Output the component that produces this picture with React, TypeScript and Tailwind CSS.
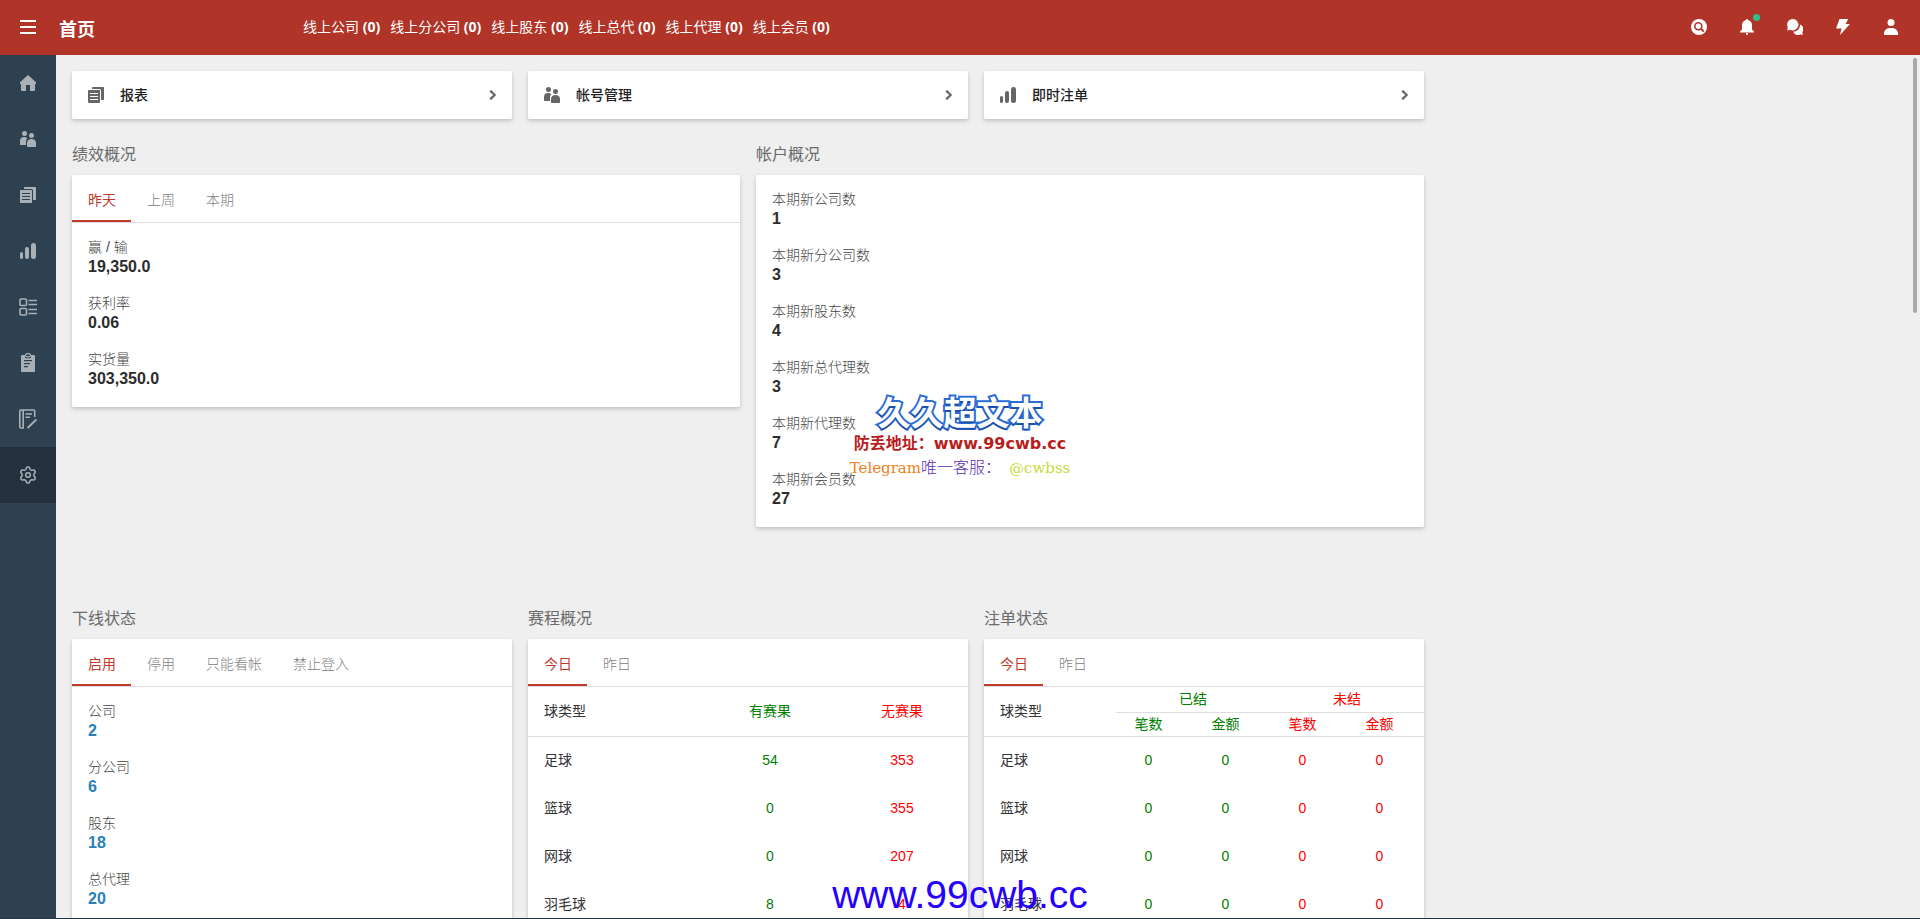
import { useState } from 'react'
import type { ReactNode } from 'react'

interface Stat {
  label: string
  value: string
}

const ONLINE = ['线上公司', '线上分公司', '线上股东', '线上总代', '线上代理', '线上会员']

const RESULTS: Stat[] = [
  { label: '赢 / 输', value: '19,350.0' },
  { label: '获利率', value: '0.06' },
  { label: '实货量', value: '303,350.0' },
]

const ACCOUNTS: Stat[] = [
  { label: '本期新公司数', value: '1' },
  { label: '本期新分公司数', value: '3' },
  { label: '本期新股东数', value: '4' },
  { label: '本期新总代理数', value: '3' },
  { label: '本期新代理数', value: '7' },
  { label: '本期新会员数', value: '27' },
]

const DOWNLINES: Stat[] = [
  { label: '公司', value: '2' },
  { label: '分公司', value: '6' },
  { label: '股东', value: '18' },
  { label: '总代理', value: '20' },
]

const MATCHES = [
  { name: '足球', done: 54, pending: 353 },
  { name: '篮球', done: 0, pending: 355 },
  { name: '网球', done: 0, pending: 207 },
  { name: '羽毛球', done: 8, pending: 4 },
]

// six rounded teeth, one pointing straight up
const GEAR_POINTS = Array.from({ length: 72 }, (_, i) => {
  const a = (i * Math.PI) / 36
  const r = 6.9 - 1.1 * Math.tanh(2 * Math.cos(6 * a))
  return `${(9 + r * Math.cos(a)).toFixed(2)},${(9 + r * Math.sin(a)).toFixed(2)}`
}).join(' ')

// icons
function MenuIcon() {
  return (
    <svg width="16" height="14" viewBox="0 0 16 14" fill="currentColor">
      <path d="M0 0h16v2H0zM0 6h16v2H0zM0 12h16v2H0z" />
    </svg>
  )
}

function HomeIcon() {
  return (
    <svg width="16" height="16" viewBox="0 0 16 16" fill="currentColor">
      <path d="M8 0l8 7.2V9h-1v6.2a.8.8 0 0 1-.8.8H10v-6H6v6H1.8a.8.8 0 0 1-.8-.8V9H0V7.2z" />
    </svg>
  )
}

function UsersIcon() {
  return (
    <svg width="16" height="16" viewBox="0 0 16 16" fill="currentColor">
      <circle cx="4.5" cy="2.5" r="2.5" />
      <circle cx="11.5" cy="4.5" r="2.5" />
      <path d="M0 13.4V10c0-2.4 1.6-4 4-4 1.5 0 2.6.5 3.3 1.3C6.3 8.3 6 9.5 6 11v3H.6a.6.6 0 0 1-.6-.6z" />
      <path d="M7 15.2V12c0-2.6 1.8-4 4.5-4S16 9.4 16 12v3.2a.8.8 0 0 1-.8.8H7.8a.8.8 0 0 1-.8-.8z" />
    </svg>
  )
}

function ReportIcon() {
  return (
    <svg width="16" height="16" viewBox="0 0 16 16" fill="currentColor">
      <path d="M4 2V.8A.8.8 0 0 1 4.8 0h10.4a.8.8 0 0 1 .8.8v11.4a.8.8 0 0 1-.8.8H13V3.5A1.5 1.5 0 0 0 11.5 2z" />
      <path
        fillRule="evenodd"
        d="M.8 3h10.4a.8.8 0 0 1 .8.8v11.4a.8.8 0 0 1-.8.8H.8a.8.8 0 0 1-.8-.8V3.8A.8.8 0 0 1 .8 3zM2 6v1h8V6zm0 3v1h8V9zm0 3v1h8v-1z"
      />
    </svg>
  )
}

function BarsIcon() {
  return (
    <svg width="16" height="16" viewBox="0 0 16 16" fill="currentColor">
      <rect x="0" y="9" width="3" height="7" rx="1.5" />
      <rect x="5" y="4" width="4" height="12" rx="2" />
      <rect x="11" y="0" width="5" height="16" rx="2.3" />
    </svg>
  )
}

function ListIcon() {
  return (
    <svg width="18" height="18" viewBox="0 0 18 18" fill="none" stroke="currentColor" strokeWidth="1.6">
      <rect x="1" y="1" width="6.5" height="6.5" rx="1" />
      <rect x="1" y="10.5" width="6.5" height="6.5" rx="1" />
      <path d="M9.5 2.5H18M9.5 6.5H18M9.5 11.5H18M9.5 15.5H18" />
    </svg>
  )
}

function ClipboardIcon() {
  return (
    <svg width="14" height="20" viewBox="0 0 14 20" fill="currentColor">
      <path
        fillRule="evenodd"
        d="M4 2H1a1 1 0 0 0-1 1v15a1 1 0 0 0 1 1h12a1 1 0 0 0 1-1V3a1 1 0 0 0-1-1h-3v2.2a1 1 0 0 1-1 1H5a1 1 0 0 1-1-1zM3 7v1.3h8V7zm0 3v1.3h6V10zm0 3v1.3h4V13z"
      />
      <rect x="4.6" y=".6" width="4.8" height="3.2" rx="1.5" fill="none" stroke="currentColor" strokeWidth="1.2" />
    </svg>
  )
}

function NoteIcon() {
  return (
    <svg width="18" height="20" viewBox="0 0 18 20" fill="none" stroke="currentColor" strokeWidth="1.6">
      <path d="M15.7 8V2a1 1 0 0 0-1-1H1.8a1 1 0 0 0-1 1v16a1 1 0 0 0 1 1H4.200V1" />
      <path d="M6.5 5H13M6.5 8.3H11" />
      <path d="M8.5 19l9-8.5" strokeWidth="1.9" />
    </svg>
  )
}

function GearIcon() {
  return (
    <svg width="18" height="18" viewBox="0 0 18 18" fill="none" stroke="currentColor" strokeWidth="1.5">
      <polygon points={GEAR_POINTS} strokeLinejoin="round" />
      <circle cx="9" cy="9" r="2.3" />
    </svg>
  )
}

function SearchIcon() {
  return (
    <svg width="16" height="16" viewBox="0 0 16 16" fill="none">
      <circle cx="8" cy="8" r="8" fill="currentColor" />
      <circle cx="7.3" cy="7.2" r="3.5" stroke="#b03428" strokeWidth="1.6" />
      <path d="M9.8 9.6l2.9 2.9" stroke="#b03428" strokeWidth="2" />
    </svg>
  )
}

function BellIcon() {
  return (
    <svg width="14" height="16" viewBox="0 0 14 16" fill="currentColor">
      <path d="M6 1a1 1 0 0 1 2 0c2.5.5 4 2.5 4 5v3.800c0 1 .7 2 2 2.700v1H0v-1c1.300-.7 2-1.700 2-2.700V6c0-2.500 1.500-4.500 4-5z" />
      <path d="M6 14h2v1a1 1 0 0 1-2 0z" />
    </svg>
  )
}

function ChatIcon() {
  return (
    <svg width="16" height="16" viewBox="0 0 16 16" fill="currentColor">
      <path d="M5.7 0a5.7 5.7 0 1 1-2.5 10.8L.3 11.4l.4-3.2A5.7 5.7 0 0 1 5.7 0z" />
      <path d="M13 5.4a5 5 0 0 1 2.300 7.800l.7 2.500-2.800-.3A5 5 0 0 1 6.200 12.800c4 0 7-3.300 6.800-7.400z" />
    </svg>
  )
}

function BoltIcon() {
  return (
    <svg width="14" height="16" viewBox="0 0 14 16" fill="currentColor">
      <path d="M3.5 0h8.7L9.6 5H14L4 16l1.6-6.5H0z" />
    </svg>
  )
}

function UserIcon() {
  return (
    <svg width="14" height="16" viewBox="0 0 14 16" fill="currentColor">
      <circle cx="7" cy="3.5" r="3.5" />
      <path d="M0 16v-1.5C0 11 2.800 9 7 9s7 2 7 5.500V16z" />
    </svg>
  )
}

function ChevronIcon() {
  return (
    <svg width="7" height="10" viewBox="0 0 7 10" fill="none" stroke="currentColor" strokeWidth="2.2">
      <path d="M1.2.6L5.6 5 1.200 9.400" />
    </svg>
  )
}

const SIDE_ITEMS = [
  { name: '首页', icon: <HomeIcon /> },
  { name: '帐号管理', icon: <UsersIcon /> },
  { name: '报表', icon: <ReportIcon /> },
  { name: '即时注单', icon: <BarsIcon /> },
  { name: '列表', icon: <ListIcon /> },
  { name: '记录', icon: <ClipboardIcon /> },
  { name: '日志', icon: <NoteIcon /> },
  { name: '设置', icon: <GearIcon />, active: true },
]

const HEADER_ITEMS = [
  { name: '搜索', icon: <SearchIcon /> },
  { name: '通知', icon: <BellIcon />, dot: true },
  { name: '消息', icon: <ChatIcon /> },
  { name: '快捷', icon: <BoltIcon /> },
  { name: '用户', icon: <UserIcon /> },
]

const SHORTCUTS = [
  { name: '报表', icon: <ReportIcon /> },
  { name: '帐号管理', icon: <UsersIcon /> },
  { name: '即时注单', icon: <BarsIcon /> },
]

function Panel({ title, children }: { title: string; children: ReactNode }) {
  return (
    <section>
      <h2 className="pt-6 pb-2 text-base leading-6 text-[#6a6a6a]">{title}</h2>
      <div className="overflow-hidden rounded-xs bg-white shadow-[0_2px_4px_rgba(0,0,0,0.2)]">{children}</div>
    </section>
  )
}

function Tabs({ items }: { items: string[] }) {
  const [current, setCurrent] = useState(0)

  return (
    <div className="flex h-12 border-b border-[#dedede]" role="tablist">
      {items.map((item, i) => (
        <button
          key={item}
          role="tab"
          aria-selected={i === current}
          onClick={() => setCurrent(i)}
          className={
            i === current
              ? 'border-b-2 border-[#c0392b] pt-1 pr-[15px] pl-4 text-[#c0392b]'
              : 'border-b-2 border-transparent pt-1 pr-[15px] pl-4 font-light text-[#808080]'
          }
        >
          {item}
        </button>
      ))}
    </div>
  )
}

function StatList({ items, link }: { items: Stat[]; link?: boolean }) {
  return (
    <dl className="px-4 pt-4">
      {items.map((s) => (
        <div key={s.label} className="pb-4">
          <dt className="leading-4 font-light text-[#444444]">{s.label}</dt>
          <dd className="text-base leading-6 font-bold text-[#2c2c2c]">
            {link ? <a href="#" className="text-[#2980b9]">{s.value}</a> : s.value}
          </dd>
        </div>
      ))}
    </dl>
  )
}

function MatchTable() {
  return (
    <table className="w-full table-fixed text-center text-[#333333]">
      <thead>
        <tr className="h-[49px] border-b border-[#dedede]">
          <th className="w-[40%] pl-4 text-left font-normal">球类型</th>
          <th className="font-normal text-[#008000]">有赛果</th>
          <th className="font-normal text-[#ff0000]">无赛果</th>
        </tr>
      </thead>
      <tbody>
        {MATCHES.map((m) => (
          <tr key={m.name} className="h-12">
            <td className="pl-4 text-left">{m.name}</td>
            <td className="text-[#008000]">{m.done}</td>
            <td className="text-[#ff0000]">{m.pending}</td>
          </tr>
        ))}
      </tbody>
    </table>
  )
}

function BetTable() {
  return (
    <table className="w-full table-fixed text-center text-[#333333]">
      <colgroup>
        <col className="w-[30%]" />
        <col span={4} />
      </colgroup>
      <thead>
        <tr className="h-[25px] leading-5">
          <th rowSpan={2} className="border-b border-[#dedede] pl-4 text-left font-normal">球类型</th>
          <th colSpan={2} className="border-b border-[#dedede] font-normal text-[#008000]">已结</th>
          <th colSpan={2} className="border-b border-[#dedede] font-normal text-[#ff0000]">未结</th>
        </tr>
        <tr className="h-6 border-b border-[#dedede] leading-5">
          <th className="pr-3 font-normal text-[#008000]">笔数</th>
          <th className="pr-3 font-normal text-[#008000]">金额</th>
          <th className="pr-3 font-normal text-[#ff0000]">笔数</th>
          <th className="pr-3 font-normal text-[#ff0000]">金额</th>
        </tr>
      </thead>
      <tbody>
        {MATCHES.map((m) => (
          <tr key={m.name} className="h-12">
            <td className="pl-4 text-left">{m.name}</td>
            <td className="pr-3 text-[#008000]">0</td>
            <td className="pr-3 text-[#008000]">0</td>
            <td className="pr-3 text-[#ff0000]">0</td>
            <td className="pr-3 text-[#ff0000]">0</td>
          </tr>
        ))}
      </tbody>
    </table>
  )
}

export default function App() {
  return (
    <div className="relative flex h-screen flex-col overflow-hidden bg-[#efefef] font-['Liberation_Sans','Noto_Sans_CJK_SC',sans-serif] text-sm">
      <header className="flex h-[55px] shrink-0 items-center bg-[#b03428] pr-[5px] pb-px text-white">
        <button aria-label="菜单" className="flex w-14 justify-center">
          <MenuIcon />
        </button>
        <h1 className="w-[247px] pt-[6px] pl-[3px] text-lg font-bold">首页</h1>
        <ul className="flex flex-1 gap-[10px] font-['Open_Sans','Noto_Sans_CJK_SC',sans-serif]">
          {ONLINE.map((name) => (
            <li key={name}>
              {name} <b>(0)</b>
            </li>
          ))}
        </ul>
        {HEADER_ITEMS.map((item) => (
          <button key={item.name} aria-label={item.name} className="relative flex h-10 w-12 items-center justify-center">
            {item.icon}
            {item.dot && <span className="absolute top-[7px] right-[11px] size-[7px] rounded-full bg-[#2fc08f]" />}
          </button>
        ))}
      </header>

      <div className="flex min-h-0 flex-1">
        <nav className="w-14 shrink-0 bg-[#2e4150] text-[#a9b1b7]">
          {SIDE_ITEMS.map((item) => (
            <a
              key={item.name}
              href="#"
              aria-label={item.name}
              className={
                item.active
                  ? 'flex h-14 items-center justify-center bg-[#24303e]'
                  : 'flex h-14 items-center justify-center'
              }
            >
              {item.icon}
            </a>
          ))}
        </nav>

        <main className="min-w-0 flex-1 overflow-hidden p-4">
          <div className="max-w-[1352px]">
            <div className="grid grid-cols-3 gap-4">
              {SHORTCUTS.map((s) => (
                <a
                  key={s.name}
                  href="#"
                  className="flex h-12 items-center gap-4 rounded-xs bg-white px-4 text-[#666666] shadow-[0_2px_4px_rgba(0,0,0,0.2)]"
                >
                  {s.icon}
                  <span className="flex-1 font-medium text-[#222222]">{s.name}</span>
                  <ChevronIcon />
                </a>
              ))}
            </div>

            <div className="grid grid-cols-2 gap-4">
              <Panel title="绩效概况">
                <Tabs items={['昨天', '上周', '本期']} />
                <StatList items={RESULTS} />
              </Panel>
              <Panel title="帐户概况">
                <StatList items={ACCOUNTS} />
              </Panel>
            </div>

            <div className="mt-14 grid grid-cols-3 gap-4">
              <Panel title="下线状态">
                <Tabs items={['启用', '停用', '只能看帐', '禁止登入']} />
                <StatList items={DOWNLINES} link />
              </Panel>
              <Panel title="赛程概况">
                <Tabs items={['今日', '昨日']} />
                <MatchTable />
              </Panel>
              <Panel title="注单状态">
                <Tabs items={['今日', '昨日']} />
                <BetTable />
              </Panel>
            </div>
          </div>
        </main>
      </div>

      {/* scroll thumb */}
      <div className="absolute top-[58px] right-[3px] h-[255px] w-1 rounded-full bg-[#a9a9a9]" />

      {/* watermarks */}
      <div className="pointer-events-none absolute inset-x-0 top-[396px] flex flex-col items-center whitespace-nowrap">
        <p className="text-[33px] leading-9 font-bold text-white [paint-order:stroke_fill] [-webkit-text-stroke:4px_#2a6cd4] [text-shadow:0_2px_0_#1b4fa8]">
          久久超文本
        </p>
        <p className="flex items-center text-base leading-6 font-bold text-[#b81c1c]">
          <span>防丢地址：</span>
          <span className="font-['DejaVu_Sans',sans-serif]">www.99cwb.cc</span>
        </p>
        <p className="flex items-center font-['DejaVu_Serif','Noto_Sans_CJK_SC',serif] text-[15px] leading-6">
          <span className="text-[#f08020]">Telegram</span>
          <span className="pr-2 text-base leading-6 font-light text-[#5b2fb0]">唯一客服：</span>
          <span className="text-[#c8dc3c]">@cwbss</span>
        </p>
      </div>
      <p className="pointer-events-none absolute inset-x-0 bottom-[2px] text-center text-[39px] leading-[44px] text-[#2600ff]">
        www.99cwb.cc
      </p>

      <div className="absolute inset-x-0 bottom-0 h-px bg-[#1f3640]" />
    </div>
  )
}
